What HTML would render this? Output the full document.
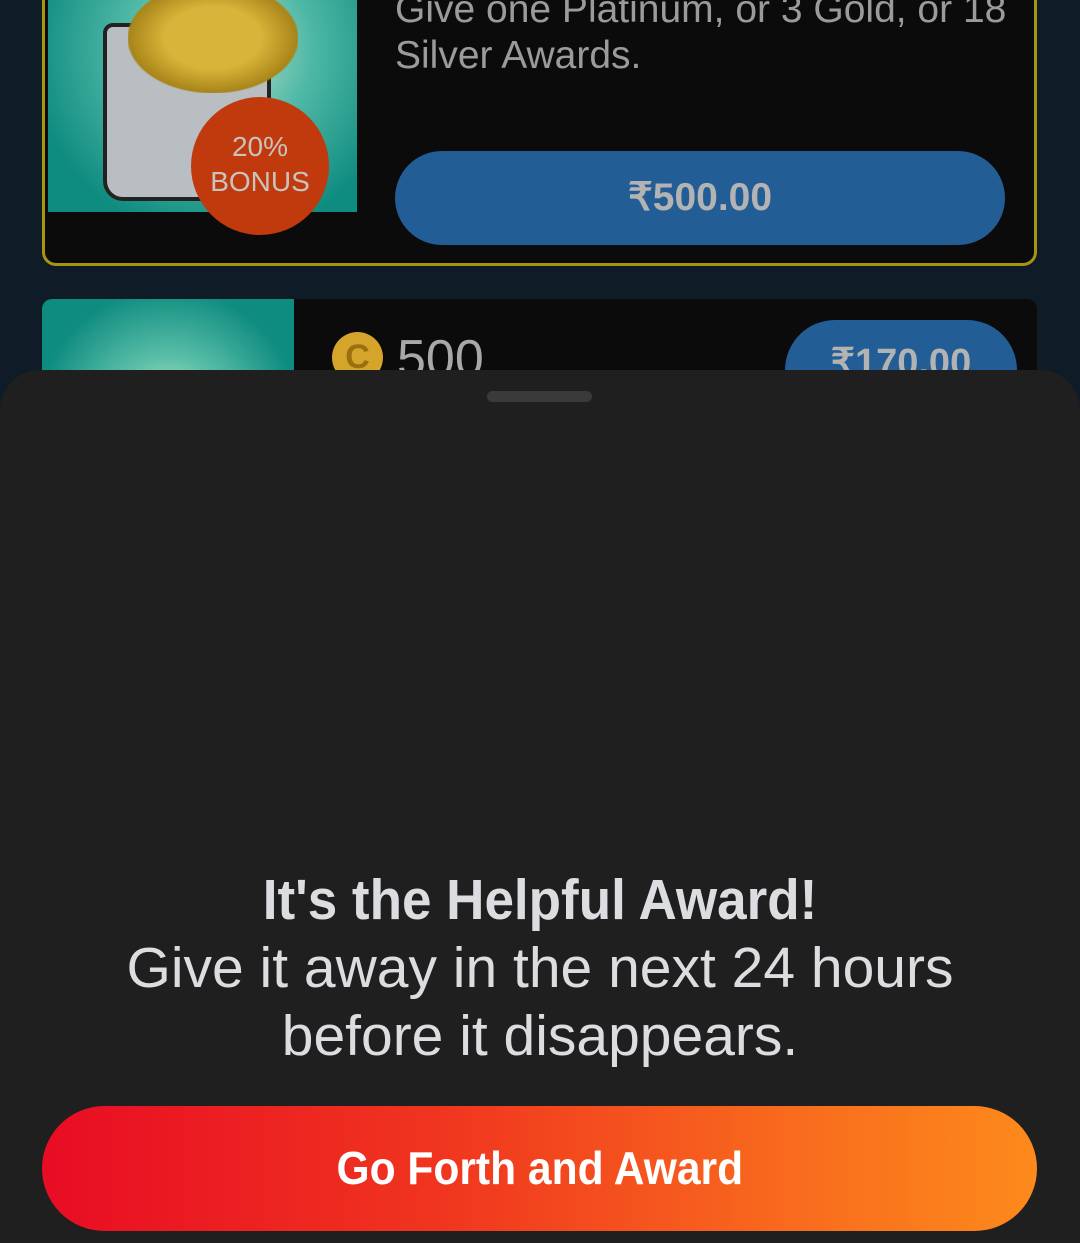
<!DOCTYPE html>
<html><head><meta charset="utf-8"><style>
html,body{margin:0;padding:0;width:1080px;height:1243px;overflow:hidden;background:#0f1c28;font-family:"Liberation Sans",sans-serif;position:relative}
.card1{position:absolute;left:42px;top:-40px;width:989px;height:300px;background:#0b0b0b;border:3px solid #a8950f;border-radius:14px;overflow:hidden}
.img1{position:absolute;left:3px;top:0;width:309px;height:249px;background:radial-gradient(circle at 55% 35%,#c8e8d0 0%,#4fb8a6 40%,#0f8c80 80%)}
.chest{position:absolute;left:55px;top:60px;width:160px;height:170px;background:#b9bec3;border-radius:10px 10px 20px 20px;border:4px solid #222}
.coins{position:absolute;left:80px;top:20px;width:170px;height:110px;background:radial-gradient(ellipse,#d9b43a 40%,#a88519 70%,transparent 72%)}
.badge{position:absolute;left:191px;top:97px;width:138px;height:138px;border-radius:50%;background:#c03a0e;color:#c9c3bd;text-align:center;font-size:28px;line-height:35px;padding-top:32px;box-sizing:border-box}
.desc{position:absolute;left:395px;top:-13px;color:#9b9b9b;font-size:39px;line-height:46px}
.btn1{position:absolute;left:395px;top:151px;width:610px;height:94px;border-radius:47px;background:#235d96;color:#b3b3b3;font-weight:bold;font-size:39px;line-height:94px;text-align:center}
.card2{position:absolute;left:42px;top:299px;width:995px;height:200px;background:#0b0b0b;border-radius:10px;overflow:hidden}
.img2{position:absolute;left:0;top:0;width:252px;height:200px;background:radial-gradient(circle at 50% 60%,#d8ecd0 0%,#5bbfa8 35%,#0f8c80 75%)}
.coin{position:absolute;left:290px;top:33px;width:51px;height:51px;border-radius:50%;background:#d4a52a;color:#9a6f10;font-weight:bold;font-size:34px;text-align:center;line-height:51px}
.n500{position:absolute;left:355px;top:30px;color:#a8a8a8;font-size:52px}
.btn2{position:absolute;left:743px;top:21px;width:232px;height:100px;border-radius:50px;background:#235d96;color:#b3b3b3;font-weight:bold;font-size:38px;text-align:center;padding-top:20px;box-sizing:border-box}
.sheet{position:absolute;left:0;top:370px;width:1080px;height:900px;background:#1f1f1f;border-radius:40px 40px 0 0}
.handle{position:absolute;left:487px;top:21px;width:105px;height:11px;border-radius:6px;background:#3a3a3a}
.txt{position:absolute;left:0;top:496px;width:1080px;text-align:center;color:#dcdde0;font-size:57px;line-height:68px}
.txt b{display:block;transform:scaleX(0.93)}
.go{position:absolute;left:42px;top:736px;width:995px;height:125px;border-radius:63px;background:linear-gradient(90deg,#e80c24 0%,#f0351f 40%,#f86a1d 75%,#fd8a1c 100%);color:#fff;font-weight:bold;font-size:46px;line-height:125px;text-align:center}
.go span{display:inline-block;transform:scaleX(0.925)}
</style></head><body>
<div class="card1">
 <div class="img1"><div class="chest"></div><div class="coins"></div></div>
</div>
<div class="badge">20%<br>BONUS</div>
<div class="desc">Give one Platinum, or 3 Gold, or 18<br>Silver Awards.</div>
<div class="btn1">₹500.00</div>
<div class="card2">
 <div class="img2"></div>
 <div class="coin">C</div>
 <div class="n500">500</div>
 <div class="btn2">₹170.00</div>
</div>
<div class="sheet">
 <div class="handle"></div>
 <div class="txt"><b>It's the Helpful Award!</b>Give it away in the next 24 hours<br>before it disappears.</div>
 <div class="go"><span>Go Forth and Award</span></div>
</div>
</body></html>
